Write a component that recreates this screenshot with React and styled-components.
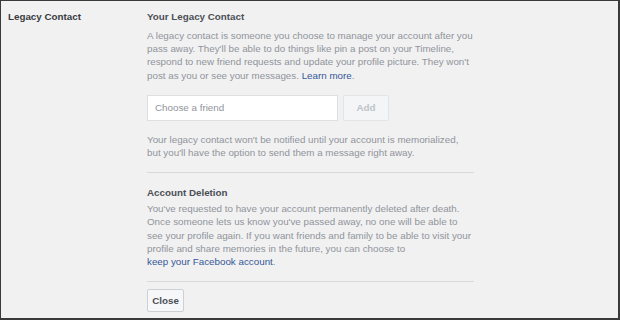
import React from "react";
import styled, { createGlobalStyle } from "styled-components";

const Global = createGlobalStyle`
  html, body { margin: 0; padding: 0; background: #f1f1f1; }
  * { box-sizing: border-box; }
`;

const App = () => {
  return (
    <Frame>
      <Global />
      <Label>Legacy Contact</Label>
      <Content>
        <Heading>Your Legacy Contact</Heading>
        <Body gap={"6px"}>
          A legacy contact is someone you choose to manage your account after you
          <br />
          pass away. They'll be able to do things like pin a post on your Timeline,
          <br />
          respond to new friend requests and update your profile picture. They won't
          <br />
          post as you or see your messages. <Link>Learn more</Link>.
        </Body>
        <InputRow>
          <FriendInput placeholder="Choose a friend" />
          <AddButton disabled>Add</AddButton>
        </InputRow>
        <Body gap={"12px"}>
          Your legacy contact won't be notified until your account is memorialized,
          <br />
          but you'll have the option to send them a message right away.
        </Body>
        <Divider />
        <Heading top={"13px"}>Account Deletion</Heading>
        <Body gap={"3px"}>
          You've requested to have your account permanently deleted after death.
          <br />
          Once someone lets us know you've passed away, no one will be able to
          <br />
          see your profile again. If you want friends and family to be able to visit your
          <br />
          profile and share memories in the future, you can choose to
          <br />
          <Link>keep your Facebook account</Link>.
        </Body>
        <Divider top={"13px"} />
        <CloseButton>Close</CloseButton>
      </Content>
    </Frame>
  );
};

export default App;

const Frame = styled.div`
  width: 620px;
  height: 320px;
  display: flex;
  align-items: flex-start;
  padding: 9px 0 0 7px;
  background: #f1f1f1;
  border-style: solid;
  border-color: #3a3a3a;
  border-width: 1px 2px 2px 1px;
  font-family: "Liberation Sans", Arial, sans-serif;
  font-size: 9.8px;
  line-height: 13px;
`;

const Label = styled.div`
  width: 139px;
  flex-shrink: 0;
  font-weight: bold;
  color: #373b41;
`;

const Content = styled.div`
  width: 327px;
  display: flex;
  flex-direction: column;
  align-items: flex-start;
`;

const Heading = styled.div`
  margin-top: ${(props) => props.top || "0"};
  font-weight: bold;
  color: #4b4f56;
`;

const Body = styled.p`
  margin: ${(props) => props.gap} 0 0;
  width: 360px;
  color: #90949c;
  line-height: 13.2px;
  white-space: nowrap;
`;

const Link = styled.a`
  color: #365899;
  cursor: pointer;
`;

const InputRow = styled.div`
  display: flex;
  gap: 5px;
  margin-top: 13px;
`;

const FriendInput = styled.input`
  width: 191px;
  height: 26px;
  padding: 0 7px;
  border: 1px solid #dddfe2;
  background: #fff;
  font-family: inherit;
  font-size: 9.8px;
  color: #1d2129;
  outline: none;

  &::placeholder {
    color: #90949c;
  }
`;

const AddButton = styled.button`
  width: 46px;
  height: 26px;
  border: 1px solid #e3e4e7;
  border-radius: 2px;
  background: #f4f5f6;
  color: #bec3c9;
  font-family: inherit;
  font-size: 9.8px;
  font-weight: bold;
  padding: 0;
`;

const Divider = styled.hr`
  width: 327px;
  margin: ${(props) => props.top || "13px"} 0 0;
  border: none;
  border-top: 1px solid #d8d9dc;
`;

const CloseButton = styled.button`
  margin-top: 7px;
  width: 37px;
  height: 23px;
  padding: 0;
  border: 1px solid #ced0d4;
  border-radius: 2px;
  background: #f6f7f9;
  color: #4b4f56;
  font-family: inherit;
  font-size: 9.8px;
  font-weight: bold;
`;
